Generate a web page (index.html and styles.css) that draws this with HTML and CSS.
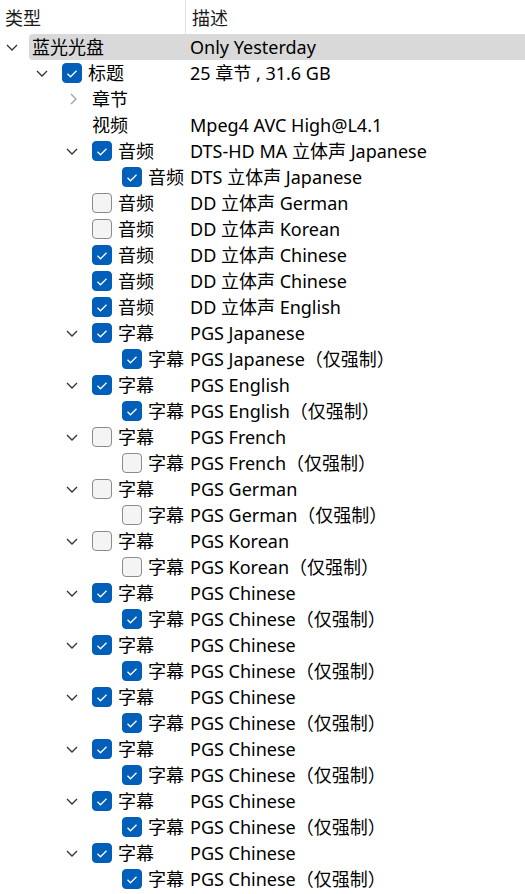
FILE: index.html
```html
<!DOCTYPE html>
<html lang="zh-CN">
<head>
<meta charset="utf-8">
<title>Tree</title>
<link rel="stylesheet" href="styles.css">
</head>
<body>
<div class="tree">
  <div class="header">
    <div class="hcell h1">类型</div>
    <div class="hcell h2">描述</div>
  </div>

  <div class="row l1"><span class="tw"><svg class="down" viewBox="0 0 12 7"><path d="M1 1 L6 6 L11 1"/></svg></span><div class="main sel"><div class="name"><span>蓝光光盘</span></div><div class="desc">Only Yesterday</div></div></div>

  <div class="row l2"><span class="tw"><svg class="down" viewBox="0 0 12 7"><path d="M1 1 L6 6 L11 1"/></svg></span><div class="main"><div class="name"><span class="cb on"><svg viewBox="0 0 20 20"><path d="M5.5 10.8 L8.5 13.8 L14.5 7.8"/></svg></span><span>标题</span></div><div class="desc">25 章节 , 31.6 GB</div></div></div>

  <div class="row l3"><span class="tw"><svg class="right" viewBox="0 0 7 12"><path d="M1 1 L6 6 L1 11"/></svg></span><div class="main"><div class="name"><span>章节</span></div><div class="desc"></div></div></div>

  <div class="row l3"><span class="tw"></span><div class="main"><div class="name"><span>视频</span></div><div class="desc">Mpeg4 AVC High@L4.1</div></div></div>

  <div class="row l3"><span class="tw"><svg class="down" viewBox="0 0 12 7"><path d="M1 1 L6 6 L11 1"/></svg></span><div class="main"><div class="name"><span class="cb on"><svg viewBox="0 0 20 20"><path d="M5.5 10.8 L8.5 13.8 L14.5 7.8"/></svg></span><span>音频</span></div><div class="desc">DTS-HD MA 立体声 Japanese</div></div></div>

  <div class="row l4"><span class="tw"></span><div class="main"><div class="name"><span class="cb on"><svg viewBox="0 0 20 20"><path d="M5.5 10.8 L8.5 13.8 L14.5 7.8"/></svg></span><span>音频</span></div><div class="desc">DTS 立体声 Japanese</div></div></div>

  <div class="row l3"><span class="tw"></span><div class="main"><div class="name"><span class="cb"></span><span>音频</span></div><div class="desc">DD 立体声 German</div></div></div>

  <div class="row l3"><span class="tw"></span><div class="main"><div class="name"><span class="cb"></span><span>音频</span></div><div class="desc">DD 立体声 Korean</div></div></div>

  <div class="row l3"><span class="tw"></span><div class="main"><div class="name"><span class="cb on"><svg viewBox="0 0 20 20"><path d="M5.5 10.8 L8.5 13.8 L14.5 7.8"/></svg></span><span>音频</span></div><div class="desc">DD 立体声 Chinese</div></div></div>

  <div class="row l3"><span class="tw"></span><div class="main"><div class="name"><span class="cb on"><svg viewBox="0 0 20 20"><path d="M5.5 10.8 L8.5 13.8 L14.5 7.8"/></svg></span><span>音频</span></div><div class="desc">DD 立体声 Chinese</div></div></div>

  <div class="row l3"><span class="tw"></span><div class="main"><div class="name"><span class="cb on"><svg viewBox="0 0 20 20"><path d="M5.5 10.8 L8.5 13.8 L14.5 7.8"/></svg></span><span>音频</span></div><div class="desc">DD 立体声 English</div></div></div>

  <div class="row l3"><span class="tw"><svg class="down" viewBox="0 0 12 7"><path d="M1 1 L6 6 L11 1"/></svg></span><div class="main"><div class="name"><span class="cb on"><svg viewBox="0 0 20 20"><path d="M5.5 10.8 L8.5 13.8 L14.5 7.8"/></svg></span><span>字幕</span></div><div class="desc">PGS Japanese</div></div></div>
  <div class="row l4"><span class="tw"></span><div class="main"><div class="name"><span class="cb on"><svg viewBox="0 0 20 20"><path d="M5.5 10.8 L8.5 13.8 L14.5 7.8"/></svg></span><span>字幕</span></div><div class="desc">PGS Japanese（仅强制）</div></div></div>

  <div class="row l3"><span class="tw"><svg class="down" viewBox="0 0 12 7"><path d="M1 1 L6 6 L11 1"/></svg></span><div class="main"><div class="name"><span class="cb on"><svg viewBox="0 0 20 20"><path d="M5.5 10.8 L8.5 13.8 L14.5 7.8"/></svg></span><span>字幕</span></div><div class="desc">PGS English</div></div></div>
  <div class="row l4"><span class="tw"></span><div class="main"><div class="name"><span class="cb on"><svg viewBox="0 0 20 20"><path d="M5.5 10.8 L8.5 13.8 L14.5 7.8"/></svg></span><span>字幕</span></div><div class="desc">PGS English（仅强制）</div></div></div>

  <div class="row l3"><span class="tw"><svg class="down" viewBox="0 0 12 7"><path d="M1 1 L6 6 L11 1"/></svg></span><div class="main"><div class="name"><span class="cb"></span><span>字幕</span></div><div class="desc">PGS French</div></div></div>
  <div class="row l4"><span class="tw"></span><div class="main"><div class="name"><span class="cb"></span><span>字幕</span></div><div class="desc">PGS French（仅强制）</div></div></div>

  <div class="row l3"><span class="tw"><svg class="down" viewBox="0 0 12 7"><path d="M1 1 L6 6 L11 1"/></svg></span><div class="main"><div class="name"><span class="cb"></span><span>字幕</span></div><div class="desc">PGS German</div></div></div>
  <div class="row l4"><span class="tw"></span><div class="main"><div class="name"><span class="cb"></span><span>字幕</span></div><div class="desc">PGS German（仅强制）</div></div></div>

  <div class="row l3"><span class="tw"><svg class="down" viewBox="0 0 12 7"><path d="M1 1 L6 6 L11 1"/></svg></span><div class="main"><div class="name"><span class="cb"></span><span>字幕</span></div><div class="desc">PGS Korean</div></div></div>
  <div class="row l4"><span class="tw"></span><div class="main"><div class="name"><span class="cb"></span><span>字幕</span></div><div class="desc">PGS Korean（仅强制）</div></div></div>

  <div class="row l3"><span class="tw"><svg class="down" viewBox="0 0 12 7"><path d="M1 1 L6 6 L11 1"/></svg></span><div class="main"><div class="name"><span class="cb on"><svg viewBox="0 0 20 20"><path d="M5.5 10.8 L8.5 13.8 L14.5 7.8"/></svg></span><span>字幕</span></div><div class="desc">PGS Chinese</div></div></div>
  <div class="row l4"><span class="tw"></span><div class="main"><div class="name"><span class="cb on"><svg viewBox="0 0 20 20"><path d="M5.5 10.8 L8.5 13.8 L14.5 7.8"/></svg></span><span>字幕</span></div><div class="desc">PGS Chinese（仅强制）</div></div></div>

  <div class="row l3"><span class="tw"><svg class="down" viewBox="0 0 12 7"><path d="M1 1 L6 6 L11 1"/></svg></span><div class="main"><div class="name"><span class="cb on"><svg viewBox="0 0 20 20"><path d="M5.5 10.8 L8.5 13.8 L14.5 7.8"/></svg></span><span>字幕</span></div><div class="desc">PGS Chinese</div></div></div>
  <div class="row l4"><span class="tw"></span><div class="main"><div class="name"><span class="cb on"><svg viewBox="0 0 20 20"><path d="M5.5 10.8 L8.5 13.8 L14.5 7.8"/></svg></span><span>字幕</span></div><div class="desc">PGS Chinese（仅强制）</div></div></div>

  <div class="row l3"><span class="tw"><svg class="down" viewBox="0 0 12 7"><path d="M1 1 L6 6 L11 1"/></svg></span><div class="main"><div class="name"><span class="cb on"><svg viewBox="0 0 20 20"><path d="M5.5 10.8 L8.5 13.8 L14.5 7.8"/></svg></span><span>字幕</span></div><div class="desc">PGS Chinese</div></div></div>
  <div class="row l4"><span class="tw"></span><div class="main"><div class="name"><span class="cb on"><svg viewBox="0 0 20 20"><path d="M5.5 10.8 L8.5 13.8 L14.5 7.8"/></svg></span><span>字幕</span></div><div class="desc">PGS Chinese（仅强制）</div></div></div>

  <div class="row l3"><span class="tw"><svg class="down" viewBox="0 0 12 7"><path d="M1 1 L6 6 L11 1"/></svg></span><div class="main"><div class="name"><span class="cb on"><svg viewBox="0 0 20 20"><path d="M5.5 10.8 L8.5 13.8 L14.5 7.8"/></svg></span><span>字幕</span></div><div class="desc">PGS Chinese</div></div></div>
  <div class="row l4"><span class="tw"></span><div class="main"><div class="name"><span class="cb on"><svg viewBox="0 0 20 20"><path d="M5.5 10.8 L8.5 13.8 L14.5 7.8"/></svg></span><span>字幕</span></div><div class="desc">PGS Chinese（仅强制）</div></div></div>

  <div class="row l3"><span class="tw"><svg class="down" viewBox="0 0 12 7"><path d="M1 1 L6 6 L11 1"/></svg></span><div class="main"><div class="name"><span class="cb on"><svg viewBox="0 0 20 20"><path d="M5.5 10.8 L8.5 13.8 L14.5 7.8"/></svg></span><span>字幕</span></div><div class="desc">PGS Chinese</div></div></div>
  <div class="row l4"><span class="tw"></span><div class="main"><div class="name"><span class="cb on"><svg viewBox="0 0 20 20"><path d="M5.5 10.8 L8.5 13.8 L14.5 7.8"/></svg></span><span>字幕</span></div><div class="desc">PGS Chinese（仅强制）</div></div></div>

  <div class="row l3"><span class="tw"><svg class="down" viewBox="0 0 12 7"><path d="M1 1 L6 6 L11 1"/></svg></span><div class="main"><div class="name"><span class="cb on"><svg viewBox="0 0 20 20"><path d="M5.5 10.8 L8.5 13.8 L14.5 7.8"/></svg></span><span>字幕</span></div><div class="desc">PGS Chinese</div></div></div>
  <div class="row l4"><span class="tw"></span><div class="main"><div class="name"><span class="cb on"><svg viewBox="0 0 20 20"><path d="M5.5 10.8 L8.5 13.8 L14.5 7.8"/></svg></span><span>字幕</span></div><div class="desc">PGS Chinese（仅强制）</div></div></div>
</div>
</body>
</html>
```

FILE: styles.css
```css
html, body {
  margin: 0;
  padding: 0;
  background: #ffffff;
}

body {
  font-family: "Noto Sans", "Noto Sans CJK SC", sans-serif;
  font-size: 18px;
  color: #000000;
  overflow: hidden;
}

.tree {
  width: 525px;
}

.header {
  display: flex;
  height: 34px;
  align-items: stretch;
}

.hcell {
  display: flex;
  align-items: center;
  color: #1a1a1a;
}

.h1 {
  width: 186px;
  padding-left: 5px;
  box-sizing: border-box;
  border-right: 1px solid #e3e3e3;
}

.h2 {
  padding-left: 6px;
}

.row {
  display: flex;
  height: 26px;
  line-height: 26px;
}

.l1 { padding-left: 0; }
.l2 { padding-left: 30px; }
.l3 { padding-left: 60px; }
.l4 { padding-left: 90px; }

.tw {
  width: 29px;
  flex: 0 0 29px;
  display: flex;
  align-items: center;
}

.down {
  width: 12px;
  height: 7px;
  margin-left: 6px;
  margin-top: 0px;
  fill: none;
  stroke: #333333;
  stroke-width: 1.3;
}

.right {
  width: 7px;
  height: 12px;
  margin-left: 10px;
  fill: none;
  stroke: #9e9e9e;
  stroke-width: 1.3;
}

.main {
  flex: 1;
  display: flex;
  align-items: center;
  border-radius: 4px 0 0 4px;
}

.main.sel {
  background: #d9d9d9;
}

.name {
  display: flex;
  align-items: center;
  padding-left: 3px;
  box-sizing: border-box;
  white-space: nowrap;
}

.l1 .name { width: 161px; }
.l2 .name { width: 131px; }
.l3 .name { width: 101px; }
.l4 .name { width: 71px; }

.desc {
  white-space: nowrap;
}

.cb {
  width: 20px;
  height: 20px;
  flex: 0 0 20px;
  box-sizing: border-box;
  border-radius: 4px;
  border: 1px solid #8b8b8b;
  background: #f4f4f4;
  margin-right: 6px;
  margin-top: -1px;
  display: flex;
}

.cb.on {
  background: #005fb8;
  border-color: #005fb8;
}

.cb svg {
  width: 20px;
  height: 20px;
  margin: -1px;
  fill: none;
  stroke: #ffffff;
  stroke-width: 1.3;
}
```
